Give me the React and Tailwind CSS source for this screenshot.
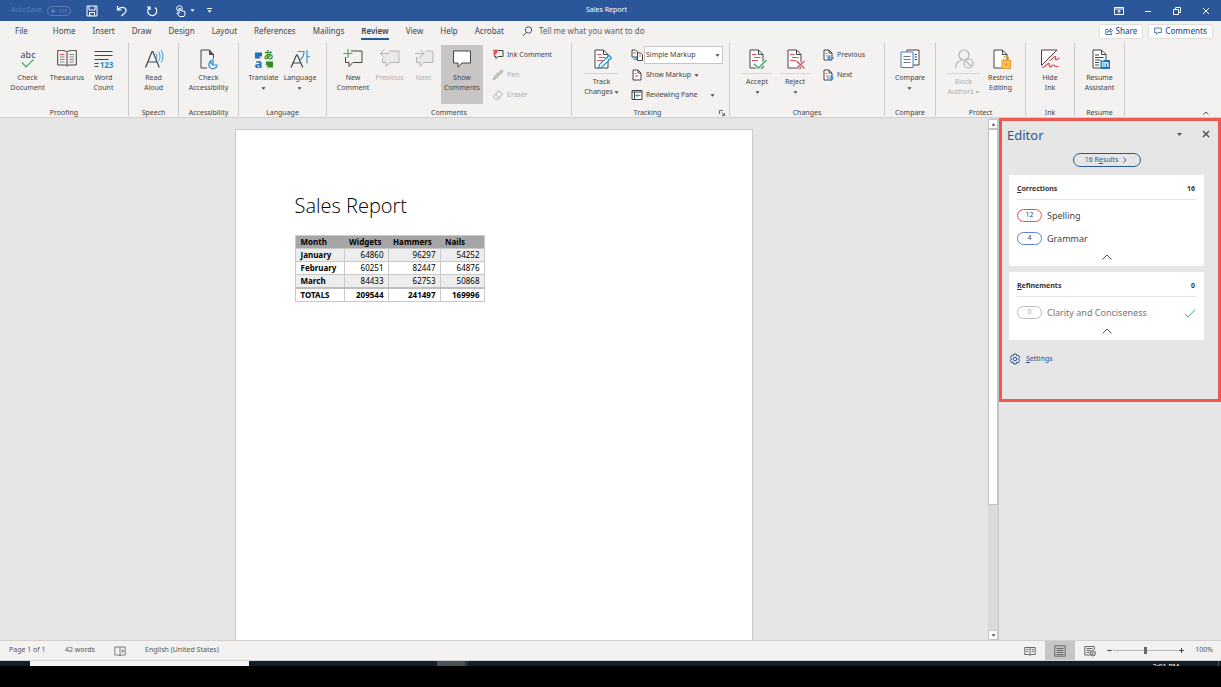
import { useState } from 'react'

const TABS = [
  'Home', 'Insert', 'Draw', 'Design', 'Layout', 'References',
  'Mailings', 'Review', 'View', 'Help', 'Acrobat',
]

const ROWS = [
  ['January', 64860, 96297, 54252],
  ['February', 60251, 82447, 64876],
  ['March', 84433, 62753, 50868],
]

/* ---------- icons ---------- */

function Svg({ size = 20, box = 20, color = '#444', w = 1, className = '', children }) {
  return (
    <svg
      width={size} height={size} viewBox={`0 0 ${box} ${box}`} fill="none"
      stroke={color} strokeWidth={w} className={`shrink-0 overflow-visible ${className}`} aria-hidden="true"
    >
      {children}
    </svg>
  )
}

const Caret = ({ className = '' }) => (
  <svg width="5" height="3" viewBox="0 0 5 3" className={`shrink-0 ${className}`} aria-hidden="true">
    <path d="M0.5 0.3h4l-2 2.4z" fill="currentColor" />
  </svg>
)

const ProofIcon = () => (
  <Svg>
    <text x="10" y="8.5" fontSize="9" textAnchor="middle" fill="#444" stroke="none">abc</text>
    <path d="M4 13.5l4 4.500 7.500-7.500" stroke="#3fae6a" strokeWidth="1.200" />
  </Svg>
)

const BookIcon = () => (
  <Svg>
    <path d="M10 3C8.500 1.500 6.500 1.500 .7 1.500v14.500H8c1 0 2 .5 2 1.300 0-.8 1-1.300 2-1.300h7.300V1.500C13.500 1.500 11.500 1.500 10 3zM10 3v14" />
    <path d="M3 5.500h4.500" stroke="#e8505b" />
    <path d="M3 8h4.500M3 10.500h4.500M3 13h4.500M12.500 5.500H17M12.500 8H17M12.500 10.500H17M12.500 13H17" stroke="#888" />
  </Svg>
)

const CountIcon = () => (
  <Svg>
    <path d="M.5 2.500h18M.5 6.500h18M.5 10.500h14M.5 14.500h4M.5 17.500h4" />
    <rect x="6" y="11.500" width="14" height="8" fill="#f3f2f1" stroke="none" />
    <text x="12.500" y="18.500" fontSize="8" fontWeight="700" textAnchor="middle" fill="#2b8fd0" stroke="none">123</text>
  </Svg>
)

const ReadIcon = () => (
  <Svg>
    <path d="M1.500 18.500L8 2.500h.8l6.500 16M4 13h9" strokeWidth="1.200" />
    <path d="M12 4.500c1.200 1.500 1.200 4 0 5.500M14.500 2.500c2 2.500 2 7 0 9.500M17 1c2.600 3.600 2.600 9 0 12.500" stroke="#3b94d1" />
  </Svg>
)

const AccessIcon = () => (
  <Svg>
    <path d="M15.500 9V5.500L11.500 1H3v18h6" />
    <path d="M11.500 1v4.500h4" fill="#555" />
    <path d="M14 11.500a4.200 4.200 0 1 0 5 5.500" stroke="#2b8fd0" strokeWidth="1.300" />
    <path d="M15 9.500v6.500h5M15 16l-3-3" stroke="#2b8fd0" strokeWidth="1.200" />
  </Svg>
)

const TranslateIcon = () => (
  <Svg>
    <path d="M1 3.500v6h6L4.800 7.500H8V3.500H3z" fill="#1e6fc0" stroke="none" />
    <text x=".5" y="18.500" fontSize="13" fontWeight="700" fill="#1e6fc0" stroke="none">a</text>
    <text x="9.500" y="10" fontSize="10" fontWeight="700" fill="#2f8a26" stroke="none" className="font-['Noto_Sans_CJK_JP',sans-serif]">あ</text>
    <path d="M12 12.500h7v6h-6.500l2-2H12z" fill="#2f8a26" stroke="none" />
  </Svg>
)

const LanguageIcon = () => (
  <Svg>
    <path d="M1 18.500L6.500 6h.8l5.500 12.500M3 14h8" strokeWidth="1.200" />
    <path d="M7.500 2.500h6.500c0 4-1.500 6.500-4 8.500M17 1v13.500M17 7.500h3" stroke="#3b94d1" strokeWidth="1.200" />
  </Svg>
)

const ShowCommentsIcon = () => (
  <Svg>
    <path d="M1.500 2h17v12H10l-4 4.200V14H1.500z" fill="#fff" />
  </Svg>
)

const NewCommentIcon = () => (
  <Svg>
    <path d="M8 2h11v11.500H10l-4 4V13.500H2.500V8" fill="none" />
    <path d="M.5 4.500h9M5 0v9" stroke="#3fae6a" strokeWidth="1.200" />
  </Svg>
)

const PrevCommentIcon = () => (
  <Svg color="#b5b3b1">
    <path d="M8 2h11v11.500H10l-4 4V13.500H2.500V8" fill="#ebe9e8" stroke="none" />
    <path d="M9 2h10v11.500H10l-4 4V13.500H2.500V9M.5 4.500H9M4.500 .5l-4 4 4 4" />
  </Svg>
)

const NextCommentIcon = () => (
  <Svg color="#b5b3b1">
    <path d="M11 2h8v11.500H10l-4 4V13.500H2.500V8" fill="#ebe9e8" stroke="none" />
    <path d="M12 2h7v11.500H10l-4 4V13.500H2.500V8M1 4.500h9M6 .5l4 4-4 4" />
  </Svg>
)

// page with red text lines, shared by the change-tracking icons
const Page = () => (
  <>
    <path d="M3 1h8.500L16 5.500V19H3z" fill="#fff" />
    <path d="M11.500 1v4.500H16" />
    <path d="M5 5.500h4.500M7 8.500h6.500M5 11.500h6" stroke="#e8505b" strokeWidth="1.200" />
  </>
)

const TrackIcon = () => (
  <Svg>
    <Page />
    <path d="M17 6.500l2.500 2.300-9.500 9.200-3.500 1 1-3.500z" fill="#fff" stroke="#2b8fd0" strokeWidth="1.200" />
    <path d="M15 8.500l2.500 2.500" stroke="#2b8fd0" />
  </Svg>
)

const AcceptIcon = () => (
  <Svg>
    <Page />
    <path d="M7 15l4.500 4.500L19.500 11" stroke="#f3f2f1" strokeWidth="3" />
    <path d="M7 15l4.500 4L19.500 11" stroke="#3fae6a" strokeWidth="1.300" />
  </Svg>
)

const RejectIcon = () => (
  <Svg>
    <Page />
    <path d="M11.500 12l8 7.500M19.500 12l-8 7.500" stroke="#f3f2f1" strokeWidth="3" />
    <path d="M11.500 12l8 7.500M19.500 12l-8 7.500" stroke="#e8505b" strokeWidth="1.300" />
  </Svg>
)

const CompareIcon = () => (
  <Svg>
    <path d="M7 1h12v15H7z" fill="#fff" />
    <path d="M14.500 5.500H17M14.500 8H17M14.500 10.500H17" />
    <path d="M1 3h12v15.500H1z" fill="#fff" stroke="#3b7fc4" />
    <path d="M3.500 7.500h7M3.500 10.500h7M3.500 13.500h7" stroke="#777" />
  </Svg>
)

const BlockIcon = () => (
  <Svg color="#b5b3b1" w={1.2}>
    <circle cx="10" cy="6" r="5" />
    <path d="M1.500 19c0-4.500 2.500-7 6-8" />
    <circle cx="14.500" cy="14.500" r="4.500" fill="#f3f2f1" />
    <path d="M11.500 11.500l6 6" />
  </Svg>
)

const RestrictIcon = () => (
  <Svg>
    <path d="M3 1h8.500L16 5.500V19H3z" fill="#fff" />
    <path d="M11.500 1v4.500H16" />
    <rect x="11" y="11.500" width="8.500" height="8" fill="#fbc15e" stroke="#e79b2c" />
    <path d="M12.800 11.500v-2a2.400 2.400 0 0 1 4.900 0v2" stroke="#e79b2c" />
    <path d="M15.200 14.500v2" stroke="#a66410" />
  </Svg>
)

const HideInkIcon = () => (
  <Svg>
    <path d="M1.500 1h15.500L1.500 16.500z" fill="#fff" />
    <path d="M2 18.500c3 0 4-3 6.500-4 1.500-.5 0 3.500 1.500 3.500s2-2 3.500-2 .5 2.500 5 1.500M9.500 11.500c2.500-.5 3.500-3.500 5.500-4 1.500-.3-.5 3 1 3.200 1.200 0 2-1.200 3.500-1.700" stroke="#e84a4f" strokeWidth="1.200" />
  </Svg>
)

const ResumeIcon = () => (
  <Svg>
    <path d="M3 1h8.500L16 5.500V19H3z" fill="#fff" />
    <path d="M11.500 1v4.500H16M5 6h4M5 8.500h8.500M5 11h5M5 13.500h4M5 16h4" />
    <rect x="10.500" y="11" width="9.500" height="9" fill="#1e74b8" stroke="none" />
    <text x="15.200" y="18" fontSize="8" fontWeight="700" textAnchor="middle" fill="#fff" stroke="none">in</text>
  </Svg>
)

const InkCommentIcon = () => (
  <Svg size={12} box={12}>
    <path d="M6 1.500h5v6H6L4 9.500V7.500H2.500V6" />
    <path d="M5.500 .8L1.500 4.500M1 1.500h3M2 6l3.500-3.500" stroke="#e84a4f" strokeWidth="1.500" />
  </Svg>
)
const PenIcon = () => (
  <Svg size={12} box={12} color="#a9a7a5">
    <path d="M9.500 1l1.500 1.500-6.500 6.500-3.500 2 1.500-3.500z" fill="#d0cecc" />
  </Svg>
)
const EraserIcon = () => (
  <Svg size={12} box={12} color="#b0aeac">
    <path d="M6.500 1.500l4 3.500-5 5.500H4L1.500 8zM3.500 5.500l4 3.500" />
  </Svg>
)
const SmallPage = ({ arrow }) => (
  <Svg size={12} box={12}>
    <path d="M2 1h5l3 3v7H2z" fill="#fff" />
    <path d="M7 1v3h3" />
    <path d="M3.500 4.500h2M4 7h3.500" stroke="#e8505b" />
    {arrow === 'left' && <path d="M12 9H6M8.500 6.500L6 9l2.500 2.500" stroke="#2b8fd0" strokeWidth="1.200" />}
    {arrow === 'right' && <path d="M5 9h6M8.500 6.500L11 9l-2.500 2.500" stroke="#2b8fd0" strokeWidth="1.200" />}
  </Svg>
)
const MarkupIcon = () => (
  <Svg size={12} box={12}>
    <path d="M1 1h3.500L6.500 3v5H1zM7 4h2.500L11.500 6v5.500H6.500V4" fill="#fff" />
    <path d="M2 4h3M8 7h2" stroke="#e8505b" />
    <path d="M2 10h4M4.500 8.500L6 10l-1.500 1.500" stroke="#2b8fd0" />
  </Svg>
)
const PaneIcon = () => (
  <Svg size={12} box={12}>
    <path d="M1 1.500h10v9H1z" fill="#fff" />
    <path d="M1 3h10M3.500 3v7.500" />
    <path d="M9.500 6.500H5M6.500 5L5 6.500 6.500 8" stroke="#2b8fd0" />
  </Svg>
)

/* ---------- ribbon ---------- */

function Group({ label, width, pad = '', center, launcher, children }) {
  return (
    <section className={`flex shrink-0 items-start ${width}`}>
      <div className="min-w-0 flex-1">
        <div className={`flex h-[65px] items-start pt-[2px] ${pad} ${center ? 'justify-center' : ''}`}>
          {children}
        </div>
        <div className="flex h-[10px] items-center px-1 leading-[10px]">
          <h2 className="flex-1 text-center">{label}</h2>
          {launcher && (
            <button aria-label="Tracking options">
              <Svg size={6} box={6} color="#666"><path d="M.5 4V.5H4M2.500 2.500l3 3M5.500 3v2.500H3" /></Svg>
            </button>
          )}
        </div>
      </div>
      <div className="h-[73px] w-px bg-[#cccac8]" />
    </section>
  )
}

function BigButton({ icon, lines, width = '', menu, split, disabled, active }) {
  return (
    <button
      disabled={disabled}
      aria-pressed={active}
      className={`flex h-[59px] flex-col items-center pt-[4px] leading-[10px] whitespace-nowrap ${width}
        ${disabled ? 'text-[#b0aeac]' : ''} ${active ? 'bg-[#c8c6c4]' : ''}`}
    >
      {icon}
      <span className={`flex flex-col items-center ${split ? 'mt-[4px] w-full border-t border-[#d6d4d2] pt-[3px]' : 'mt-[4px]'}`}>
        {lines.map((line, i) => (
          <span key={line} className="flex items-center gap-[1px]">
            {line}
            {menu === 'inline' && i === lines.length - 1 && <Caret />}
          </span>
        ))}
        {menu === 'below' && <span className="flex h-[10px] items-center"><Caret /></span>}
      </span>
    </button>
  )
}

function SmallButton({ icon, label, disabled, menu }) {
  return (
    <button
      disabled={disabled}
      className={`flex h-5 items-center gap-[3px] whitespace-nowrap ${disabled ? 'text-[#b0aeac]' : ''}`}
    >
      {icon}
      <span>{label}</span>
      {menu && <Caret />}
    </button>
  )
}

function Ribbon() {
  const [markup, setMarkup] = useState('Simple Markup')
  return (
    <div className="flex h-[77px] shrink-0 items-start overflow-hidden border-b border-[#d2d0ce] bg-[#f3f2f1] pt-[2px] text-[7px] text-[#444]">
      <Group label="Proofing" width="w-[129px]" pad="pl-[8px]">
        <BigButton icon={<ProofIcon />} lines={['Check', 'Document']} width="w-[39px]" />
        <BigButton icon={<BookIcon />} lines={['Thesaurus']} width="w-[40px]" />
        <BigButton icon={<CountIcon />} lines={['Word', 'Count']} width="w-[33px]" />
      </Group>
      <Group label="Speech" width="w-[50px]" center>
        <BigButton icon={<ReadIcon />} lines={['Read', 'Aloud']} />
      </Group>
      <Group label="Accessibility" width="w-[60px]" center>
        <BigButton icon={<AccessIcon />} lines={['Check', 'Accessibility']} />
      </Group>
      <Group label="Language" width="w-[88px]" pad="pl-[6px]">
        <BigButton icon={<TranslateIcon />} lines={['Translate']} width="w-[37px]" menu="below" />
        <BigButton icon={<LanguageIcon />} lines={['Language']} width="w-[36px]" menu="below" />
      </Group>
      <Group label="Comments" width="w-[245px]" pad="pl-[6px]">
        <BigButton icon={<NewCommentIcon />} lines={['New', 'Comment']} width="w-[40px]" />
        <BigButton icon={<PrevCommentIcon />} lines={['Previous']} width="w-[33px]" disabled />
        <BigButton icon={<NextCommentIcon />} lines={['Next']} width="w-[35px]" disabled />
        <BigButton icon={<ShowCommentsIcon />} lines={['Show', 'Comments']} width="w-[42px]" active />
        <div className="ml-[9px] flex flex-col">
          <SmallButton icon={<InkCommentIcon />} label="Ink Comment" />
          <SmallButton icon={<PenIcon />} label="Pen" disabled />
          <SmallButton icon={<EraserIcon />} label="Eraser" disabled />
        </div>
      </Group>
      <Group label="Tracking" width="w-[158px]" pad="pl-[12px]" launcher>
        <BigButton icon={<TrackIcon />} lines={['Track', 'Changes']} width="w-[35px]" menu="inline" split />
        <div className="ml-[12px] flex w-[92px] flex-col">
          <div className="flex h-5 items-center gap-[1px]">
            <MarkupIcon />
            <div className="flex h-[18px] flex-1 items-center border border-[#c8c6c4] bg-white pr-[2px]">
              <select
                aria-label="Display for review"
                value={markup}
                onChange={e => setMarkup(e.target.value)}
                className="min-w-0 flex-1 appearance-none bg-transparent pl-[1px] outline-none"
              >
                <option>Simple Markup</option>
                <option>All Markup</option>
                <option>No Markup</option>
                <option>Original</option>
              </select>
              <Caret />
            </div>
          </div>
          <SmallButton icon={<SmallPage />} label="Show Markup" menu />
          <div className="flex items-center justify-between pr-[8px]">
            <SmallButton icon={<PaneIcon />} label="Reviewing Pane" />
            <button aria-label="Reviewing pane options"><Caret /></button>
          </div>
        </div>
      </Group>
      <Group label="Changes" width="w-[155px]" pad="pl-[12px]">
        <BigButton icon={<AcceptIcon />} lines={['Accept']} width="w-[30px]" menu="below" split />
        <BigButton icon={<RejectIcon />} lines={['Reject']} width="ml-2 w-[30px]" menu="below" split />
        <div className="ml-[12px] flex flex-col">
          <SmallButton icon={<SmallPage arrow="left" />} label="Previous" />
          <SmallButton icon={<SmallPage arrow="right" />} label="Next" />
        </div>
      </Group>
      <Group label="Compare" width="w-[51px]" center>
        <BigButton icon={<CompareIcon />} lines={['Compare']} menu="below" />
      </Group>
      <Group label="Protect" width="w-[90px]" pad="pl-[11px]">
        <BigButton icon={<BlockIcon />} lines={['Block', 'Authors']} width="w-[33px]" menu="inline" split disabled />
        <BigButton icon={<RestrictIcon />} lines={['Restrict', 'Editing']} width="ml-[2px] w-[37px]" />
      </Group>
      <Group label="Ink" width="w-[49px]" center>
        <BigButton icon={<HideInkIcon />} lines={['Hide', 'Ink']} />
      </Group>
      <Group label="Resume" width="w-[50px]" center>
        <BigButton icon={<ResumeIcon />} lines={['Resume', 'Assistant']} />
      </Group>
      <button aria-label="Collapse the ribbon" className="mr-[11px] ml-auto self-end">
        <Svg size={8} box={8} color="#555"><path d="M1.500 5.500L4 3l2.500 2.500" /></Svg>
      </button>
    </div>
  )
}

/* ---------- top of window ---------- */

function TitleBar() {
  return (
    <header className="grid h-[21px] shrink-0 grid-cols-[1fr_auto_1fr] items-center bg-[#2b579a] pr-[10px] pl-[11px] text-[7px] text-white">
      <div className="flex items-center">
        <span id="autosave" className="w-[36px] text-[#5c7fb6]">AutoSave</span>
        <button
          role="switch" aria-checked="false" aria-labelledby="autosave"
          className="flex h-[10px] w-[24px] items-center justify-between rounded-full border border-[#5c7fb6] px-[3px] text-[6px] leading-none text-[#5c7fb6]"
        >
          <span className="size-1 rounded-full bg-[#5c7fb6]" />
          Off
        </button>
        <button aria-label="Save" className="ml-[15px]">
          <Svg size={12} box={12} color="#fff"><path d="M1 1h10v10H1zM3 1v4h6V1M3.500 11V7.500h5V11M5 9.500V11" /></Svg>
        </button>
        <button aria-label="Undo" className="ml-[18px]">
          <Svg size={12} box={12} color="#fff" w={1.2}><path d="M1.500 1v4h4M1.500 5C4 1.500 9 1.500 10 4.500S7.500 9 5.500 11" /></Svg>
        </button>
        <button aria-label="Repeat" className="ml-[18px]">
          <Svg size={12} box={12} color="#fff" w={1.2}><path d="M3.500 2.500a4.500 4.500 0 1 0 5.500 0M1 2h3v3" /></Svg>
        </button>
        <button aria-label="Touch mode" className="ml-[17px] flex items-center gap-[3px]">
          <Svg size={12} box={12} color="#fff">
            <circle cx="4.500" cy="3.500" r="2.800" />
            <path d="M4 3.500v5L2.500 7.500 2 8.500l2.500 3h4.500l1-2.500V6.500L5.500 5.500v-2z" fill="#2b579a" />
          </Svg>
          <Caret />
        </button>
        <button aria-label="Customize toolbar" className="ml-[12px] flex flex-col items-center gap-[1px]">
          <span className="h-px w-[5px] bg-white" />
          <Caret />
        </button>
      </div>
      <h1 className="mr-[9px]">Sales Report</h1>
      <div className="flex items-center justify-end gap-[19px]">
        <button aria-label="Ribbon display options">
          <Svg size={10} box={10} color="#fff"><path d="M.5 1.500h9v7h-9zM.5 3h9M5 7.500V4.500M3.500 5.500L5 4.200l1.500 1.300" /></Svg>
        </button>
        <button aria-label="Minimize"><Svg size={10} box={10} color="#fff"><path d="M2 5.500h6" /></Svg></button>
        <button aria-label="Restore">
          <Svg size={10} box={10} color="#fff"><path d="M1.500 3.500h5v5h-5zM3.500 3.500v-2h5v5h-2" /></Svg>
        </button>
        <button aria-label="Close"><Svg size={10} box={10} color="#fff"><path d="M2 2l6 6M8 2L2 8" /></Svg></button>
      </div>
    </header>
  )
}

function TabBar() {
  return (
    <div className="flex h-[20px] shrink-0 items-center bg-[#f3f2f1] pr-[8px] text-[8px] text-[#444]">
      <nav className="flex items-center gap-[17px] pl-[15px]">
        <a href="#file" className="mr-[8px]">File</a>
        {TABS.map(tab => (
          <a
            key={tab}
            href={`#${tab.toLowerCase()}`}
            className={`border-b-2 pt-[2px] leading-[14px] ${tab === 'Review' ? 'border-[#2b579a] font-semibold' : 'border-transparent'}`}
          >
            {tab}
          </a>
        ))}
      </nav>
      <label className="ml-[18px] flex items-center gap-[6px]">
        <Svg size={11} box={11} color="#555"><circle cx="6.500" cy="4" r="3.200" /><path d="M4.300 6.500L.8 10" /></Svg>
        <input
          type="text" aria-label="Tell me what you want to do" placeholder="Tell me what you want to do"
          className="w-[120px] bg-transparent outline-none placeholder:text-[#605e5c]"
        />
      </label>
      <div className="ml-auto flex gap-[5px] text-[#2b579a]">
        <button className="flex h-[15px] items-center gap-[3px] rounded-xs border border-[#e1dfdd] bg-white px-[5px]">
          <Svg size={8} box={8} color="#2b579a" w={0.8}><path d="M3 2.500H.8v5h5.700V6M2.500 5.500C2.800 3.500 4 3 5.500 3V1.500L7.600 3.700 5.500 5.500V4.300C4.200 4.200 3.200 4.500 2.500 5.500z" /></Svg>
          <span className="font-medium">Share</span>
        </button>
        <button className="flex h-[15px] items-center gap-[3px] rounded-xs border border-[#e1dfdd] bg-white px-[5px]">
          <Svg size={8} box={8} color="#2b579a" w={0.8}><path d="M.7 1h6.600v4.500H4L2.300 7.300V5.500H.7z" /></Svg>
          <span className="font-medium">Comments</span>
        </button>
      </div>
    </div>
  )
}

/* ---------- document ---------- */

function Document() {
  return (
    <main className="flex min-w-0 flex-1 justify-center overflow-hidden pt-[11px] pr-px">
      <article className="w-[518px] border border-b-0 border-[#c8c8c8] bg-white px-[59px] pt-[62px] text-black">
        <h2 className="font-['Open_Sans','Noto_Sans',sans-serif] text-[20px] leading-[28px] font-light">Sales Report</h2>
        <table className="mt-[15px] w-[189px] table-fixed border-collapse border border-[#c9c9c9] text-[8px] leading-[12px]">
          <thead>
            <tr className="border-b border-[#a5a5a5] bg-[#a5a5a5] text-left">
              <th className="w-[49px] pl-[5px]">Month</th>
              <th className="w-[44px] pl-[5px]">Widgets</th>
              <th className="w-[52px] pl-[5px]">Hammers</th>
              <th className="w-[44px] pl-[5px]">Nails</th>
            </tr>
          </thead>
          <tbody>
            {ROWS.map(([month, ...cells]) => (
              <tr key={month} className="odd:bg-[#ededed]">
                <th className="border border-[#c9c9c9] pl-[5px] text-left">{month}</th>
                {cells.map(n => (
                  <td key={n} className="border border-[#c9c9c9] pr-[4px] text-right">{n}</td>
                ))}
              </tr>
            ))}
            <tr className="border-t-2 border-[#bfbfbf] font-bold">
              <th className="border-r border-[#c9c9c9] pl-[5px] text-left">TOTALS</th>
              <td className="border-r border-[#c9c9c9] pr-[4px] text-right">209544</td>
              <td className="border-r border-[#c9c9c9] pr-[4px] text-right">241497</td>
              <td className="pr-[4px] text-right">169996</td>
            </tr>
          </tbody>
        </table>
      </article>
    </main>
  )
}

function ScrollBar() {
  return (
    <div className="flex w-[11px] shrink-0 flex-col border-r border-[#c6c6c6] bg-[#dadada] pt-[1px] text-[#555]">
      <button aria-label="Scroll up" className="flex h-[10px] items-center justify-center border border-[#c6c6c6] bg-white">
        <Caret className="rotate-180" />
      </button>
      <div className="flex-1">
        <div className="h-3/4 border border-[#c0c0c0] bg-white" />
      </div>
      <button aria-label="Scroll down" className="flex h-[10px] items-center justify-center border border-[#c6c6c6] bg-white">
        <Caret />
      </button>
    </div>
  )
}

/* ---------- editor pane ---------- */

function Card({ initial, rest, total, children }) {
  return (
    <section className="bg-white px-[8px] pt-[8px] pb-[2px]">
      <div className="mb-[4px] flex h-[17px] justify-between border-b border-[#e4e4e4] pr-[1px] text-[7px] leading-[12px] font-bold text-[#333]">
        <h3><span className="underline">{initial}</span>{rest}</h3>
        <span>{total}</span>
      </div>
      {children}
      <button aria-label={`Collapse ${initial}${rest}`} className="flex h-[14px] w-full items-center justify-center">
        <Svg size={12} box={12} color="#555"><path d="M1.500 8.500L6 4l4.500 4.500" /></Svg>
      </button>
    </section>
  )
}

function Issue({ count, label, pill, text = 'text-[#444]', done }) {
  return (
    <button className={`flex h-[23px] w-full items-center text-[9px] ${text}`}>
      <span className={`mr-[5px] flex h-[13px] w-[25px] items-center justify-center rounded-full border text-[7px] ${pill}`}>
        {count}
      </span>
      {label}
      {done && (
        <Svg size={12} box={12} color="#3fae6a" className="ml-auto"><path d="M.8 7l3.200 3L11.200 2.500" /></Svg>
      )}
    </button>
  )
}

function EditorPane() {
  return (
    <aside className="w-[222px] shrink-0">
      <div className="border-[3px] border-[#ee594f] pr-[14px] pb-[33px] pl-[7px]">
        <div className="-mr-[7px] -ml-[2px] flex h-[29px] items-center">
          <h2 className="flex-1 text-[13px] text-[#2b579a]">Editor</h2>
          <button aria-label="Pane options" className="mr-[19px] mb-[3px] text-[#555]"><Caret className="scale-125" /></button>
          <button aria-label="Close pane" className="mb-[3px]">
            <Svg size={10} box={10} color="#444" w={1.2}><path d="M2 2l6 6M8 2L2 8" /></Svg>
          </button>
        </div>
        <button className="mx-auto mt-[3px] flex h-[14px] w-[68px] items-center justify-center gap-[4px] rounded-full border border-[#2b579a] text-[7px] text-[#2b579a]">
          <span>16 R<span className="underline">e</span>sults</span>
          <Svg size={6} box={6} color="#2b579a"><path d="M1.500 .5L4 3 1.500 5.500" /></Svg>
        </button>
        <div className="mt-[8px] flex flex-col gap-[6px]">
          <Card initial="C" rest="orrections" total={16}>
            <Issue count={12} label="Spelling" pill="border-[#e3505a]" />
            <Issue count={4} label="Grammar" pill="border-[#5b7fe0]" />
          </Card>
          <Card initial="R" rest="efinements" total={0}>
            <Issue count={0} label="Clarity and Conciseness" pill="border-[#bbb] text-[#aaa]" text="text-[#777]" done />
          </Card>
        </div>
        <a href="#settings" className="mt-[12px] flex h-[14px] items-center gap-[5px] text-[7px] text-[#1f4e8c]">
          <Svg size={12} box={12} color="#2b579a">
            <path d="M4.800 1h2.400l.5 1.700 1.700-.4 1.200 2L9.500 6l1.100 1.700-1.200 2-1.700-.4-.5 1.700H4.800l-.5-1.700-1.700.4-1.200-2L2.500 6 1.400 4.300l1.200-2 1.700.4z" />
            <circle cx="6" cy="6" r="1.800" />
          </Svg>
          <span><span className="underline">S</span>ettings</span>
        </a>
      </div>
    </aside>
  )
}

/* ---------- bottom of window ---------- */

function StatusBar() {
  const [zoom, setZoom] = useState(50)
  return (
    <footer className="flex h-[21px] shrink-0 items-center border-y border-[#d2d0ce] bg-[#f3f2f1] pr-[8px] pl-[9px] text-[7px] text-[#555]">
      <span className="w-[56px]">Page 1 of 1</span>
      <span className="w-[49px]">42 words</span>
      <button aria-label="Proofing errors" className="mr-[19px]">
        <Svg size={12} box={12} color="#666" w={0.8}><path d="M6 2H.8v8H5l1 1 1-1h4.200V2zM6 2v9M7.500 4.500l2.500 3M10 4.500L7.500 7.500" /></Svg>
      </button>
      <span>English (United States)</span>
      <div className="ml-auto flex h-full items-center">
        <button aria-label="Read mode" className="flex h-full w-[30px] items-center justify-center">
          <Svg size={12} box={12} color="#666"><path d="M6 2.500H.8v7H5l1 1 1-1h4.200v-7zM6 2.500v8M2.300 4.500h2M2.300 6.500h2M7.700 4.500h2M7.700 6.500h2" /></Svg>
        </button>
        <button aria-label="Print layout" className="flex h-full w-[30px] items-center justify-center bg-[#c8c6c4]">
          <Svg size={12} box={12} color="#666"><path d="M.8 .8h10.400v10.400H.8zM2.500 3.500h7M2.500 5.500h7M2.500 7.500h7M2.500 9.500h7" /></Svg>
        </button>
        <button aria-label="Web layout" className="flex h-full w-[30px] items-center justify-center">
          <Svg size={12} box={12} color="#666">
            <path d="M6 10H.8V1.500h9.400V5M2.500 3.500h6M2.500 5.500h4M2.500 7.500h3" />
            <circle cx="8.800" cy="8.300" r="2.700" fill="#ccc" />
            <path d="M7.500 7l1.500 1.300L8 10" />
          </Svg>
        </button>
        <button aria-label="Zoom out" className="ml-[1px]"><Svg size={7} box={7} color="#444" w={1.2}><path d="M1.500 3.500h4" /></Svg></button>
        <input
          type="range" aria-label="Zoom" value={zoom} onChange={e => setZoom(e.target.value)}
          className="h-[10px] w-[65px] appearance-none bg-transparent [&::-webkit-slider-runnable-track]:h-px [&::-webkit-slider-runnable-track]:bg-[#b8b6b4] [&::-webkit-slider-thumb]:-mt-[3px] [&::-webkit-slider-thumb]:h-[7px] [&::-webkit-slider-thumb]:w-[3px] [&::-webkit-slider-thumb]:appearance-none [&::-webkit-slider-thumb]:bg-[#666]"
        />
        <button aria-label="Zoom in"><Svg size={7} box={7} color="#444"><path d="M1 3.500h5M3.500 1v5" /></Svg></button>
        <span className="ml-[10px]">100%</span>
      </div>
    </footer>
  )
}

function Taskbar() {
  return (
    <div className="shrink-0 bg-black pb-[21px]">
      <div className="flex h-[5px] overflow-hidden bg-[#0f202a]">
        <div className="ml-[30px] w-[219px] bg-[#f3f3f3]" />
        <div className="ml-[188px] w-[28px] bg-[#485154]" />
        <div className="h-full w-[3px] bg-[#2b3539]" />
        <time className="mt-[1px] mr-[39px] ml-auto text-[7px] leading-[10px] text-white">2:01 PM</time>
        <div className="mr-[2px] w-px bg-[#4a555a]" />
      </div>
    </div>
  )
}

export default function App() {
  return (
    <div className="flex h-screen flex-col overflow-hidden bg-[#e6e6e6] font-['Noto_Sans','Open_Sans',sans-serif]">
      <TitleBar />
      <TabBar />
      <Ribbon />
      <div className="flex min-h-0 flex-1">
        <Document />
        <ScrollBar />
        <EditorPane />
      </div>
      <StatusBar />
      <Taskbar />
    </div>
  )
}
